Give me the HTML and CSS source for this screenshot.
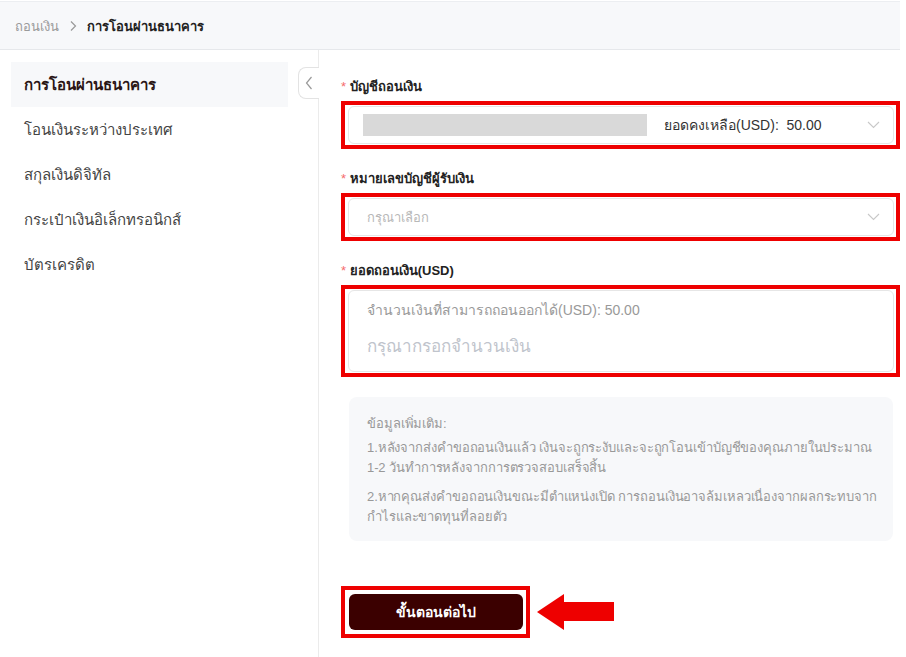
FILE: index.html
```html
<!DOCTYPE html>
<html lang="th">
<head>
<meta charset="utf-8">
<title>การโอนผ่านธนาคาร</title>
<link rel="stylesheet" href="styles.css">
</head>
<body>
<div class="page">
  <header class="crumbs">
    <span class="crumb-muted">ถอนเงิน</span>
    <svg class="crumb-sep" width="10" height="12" viewBox="0 0 10 12"><path d="M3 1.5 L7.5 6 L3 10.5" fill="none" stroke="#999" stroke-width="1.2"/></svg>
    <span class="crumb-current">การโอนผ่านธนาคาร</span>
  </header>
  <div class="body">
    <aside class="sidebar">
      <div class="nav-item active">การโอนผ่านธนาคาร</div>
      <div class="nav-item">โอนเงินระหว่างประเทศ</div>
      <div class="nav-item">สกุลเงินดิจิทัล</div>
      <div class="nav-item">กระเป๋าเงินอิเล็กทรอนิกส์</div>
      <div class="nav-item">บัตรเครดิต</div>
      <button class="collapse" aria-label="collapse">
        <svg width="8" height="14" viewBox="0 0 8 14"><path d="M6.5 1 L1.5 7 L6.5 13" fill="none" stroke="#999" stroke-width="1.2"/></svg>
      </button>
    </aside>
    <main class="main">
      <div class="field">
        <div class="label"><span class="req">*</span> บัญชีถอนเงิน</div>
        <div class="mark">
          <div class="select">
            <div class="masked"></div>
            <div class="balance">ยอดคงเหลือ(USD):&nbsp; 50.00</div>
            <svg class="chev" width="13" height="8" viewBox="0 0 13 8"><path d="M1 1 L6.5 6.5 L12 1" fill="none" stroke="#c8c8c8" stroke-width="1.1"/></svg>
          </div>
        </div>
      </div>
      <div class="field">
        <div class="label"><span class="req">*</span> หมายเลขบัญชีผู้รับเงิน</div>
        <div class="mark">
          <div class="select">
            <div class="placeholder">กรุณาเลือก</div>
            <svg class="chev" width="13" height="8" viewBox="0 0 13 8"><path d="M1 1 L6.5 6.5 L12 1" fill="none" stroke="#c8c8c8" stroke-width="1.1"/></svg>
          </div>
        </div>
      </div>
      <div class="field">
        <div class="label"><span class="req">*</span> ยอดถอนเงิน(USD)</div>
        <div class="mark">
          <div class="amount">
            <div class="avail">จำนวนเงินที่สามารถถอนออกได้(USD): 50.00</div>
            <div class="amount-ph">กรุณากรอกจำนวนเงิน</div>
          </div>
        </div>
      </div>
      <div class="info">
        <p class="info-title">ข้อมูลเพิ่มเติม:</p>
        <p>1.หลังจากส่งคำขอถอนเงินแล้ว เงินจะถูกระงับและจะถูกโอนเข้าบัญชีของคุณภายในประมาณ <span class="nw">1-2</span> วันทำการหลังจากการตรวจสอบเสร็จสิ้น</p>
        <p>2.หากคุณส่งคำขอถอนเงินขณะมีตำแหน่งเปิด การถอนเงินอาจล้มเหลวเนื่องจากผลกระทบจากกำไรและขาดทุนที่ลอยตัว</p>
      </div>
      <div class="actions">
        <div class="mark mark-btn"><button class="next">ขั้นตอนต่อไป</button></div>
        <svg class="arrow" width="78" height="36" viewBox="0 0 78 36"><path d="M0 18 L27 0 L27 8 L77 8 L77 27 L27 27 L27 36 Z" fill="#ee0000"/></svg>
      </div>
    </main>
  </div>
</div>
</body>
</html>
```
FILE: styles.css
```css
* { box-sizing: border-box; }
html, body { margin: 0; padding: 0; background: #fff; }
body {
  font-family: "Liberation Sans", "Noto Sans", sans-serif;
  color: #333;
}
.page { width: 900px; }
.crumbs {
  height: 49px;
  margin-top: 1px;
  background: #f7f8fa;
  border-top: 1px solid #eceef1;
  border-bottom: 1px solid #e6e8eb;
  display: flex;
  align-items: center;
  padding: 1px 0 0 15px;
  font-size: 13px;
}
.crumb-muted { color: #9a9a9a; }
.crumb-sep { margin: 0 9px 0 9px; }
.crumb-current { color: #222; font-weight: 700; }

.body { display: flex; min-height: 608px; }
.sidebar {
  position: relative;
  width: 319px;
  flex: none;
  border-right: 1px solid #ebebeb;
  padding: 12px 0 0 11px;
}
.nav-item {
  width: 277px;
  height: 45px;
  display: flex;
  align-items: center;
  padding-left: 13px;
  font-size: 15px;
  color: #444;
}
.nav-item.active {
  background: #f7f8fa;
  color: #2a1515;
  font-weight: 700;
}
.collapse {
  position: absolute;
  right: -1px;
  top: 17px;
  width: 21px;
  height: 32px;
  border: 1px solid #e3e3e3;
  border-right: none;
  border-radius: 8px 0 0 8px;
  background: #fff;
  padding: 0;
  display: flex;
  align-items: center;
  justify-content: center;
}

.main {
  flex: 1;
  padding: 27px 0 0 22px;
}
.field { margin-bottom: 20px; }
.label {
  height: 20px;
  line-height: 20px;
  font-size: 13px;
  font-weight: 700;
  color: #222;
  margin-bottom: 4px;
}
.req { color: #f56c6c; font-weight: 400; }
.mark {
  border: 4px solid #ee0000;
  padding: 1px 2px 1px 3px;
}
.select {
  height: 38px;
  border: 1px solid #e6e6e6;
  border-radius: 6px;
  display: flex;
  align-items: center;
  padding: 0 13px 0 14px;
}
.masked {
  width: 284px;
  height: 22px;
  background: #d9d9d9;
}
.balance {
  margin-left: 17px;
  font-size: 14px;
  color: #333;
}
.chev { margin-left: auto; }
.placeholder {
  padding-left: 4px;
  font-size: 13px;
  color: #b8b8b8;
}
.amount {
  height: 82px;
  border: 1px solid #e6e6e6;
  border-radius: 6px;
  padding: 9px 18px 0 18px;
}
.avail { font-size: 14px; color: #999; line-height: 20px; }
.amount-ph { font-size: 17px; color: #c0c4cc; margin-top: 16px; line-height: 22px; }

.info {
  margin: 0 7px 0 8px;
  background: #f7f8fa;
  border-radius: 8px;
  padding: 17px 6px 14px 18px;
  font-size: 13px;
  color: #999;
  line-height: 20px;
  letter-spacing: -0.1px;
}
.info p { margin: 0 0 9px 0; }
.info p:last-child { margin-bottom: 0; }
.info .info-title { margin-bottom: 4px; }
.nw { white-space: nowrap; }

.actions {
  margin-top: 45px;
  display: flex;
  align-items: center;
}
.mark-btn { padding: 4px 3px 4px 4px; }
.next {
  width: 174px;
  height: 36px;
  border: none;
  border-radius: 6px;
  background: #3b0000;
  color: #fff;
  font-family: inherit;
  font-size: 14px;
  font-weight: 700;
}
.arrow { margin-left: 7px; }
```
